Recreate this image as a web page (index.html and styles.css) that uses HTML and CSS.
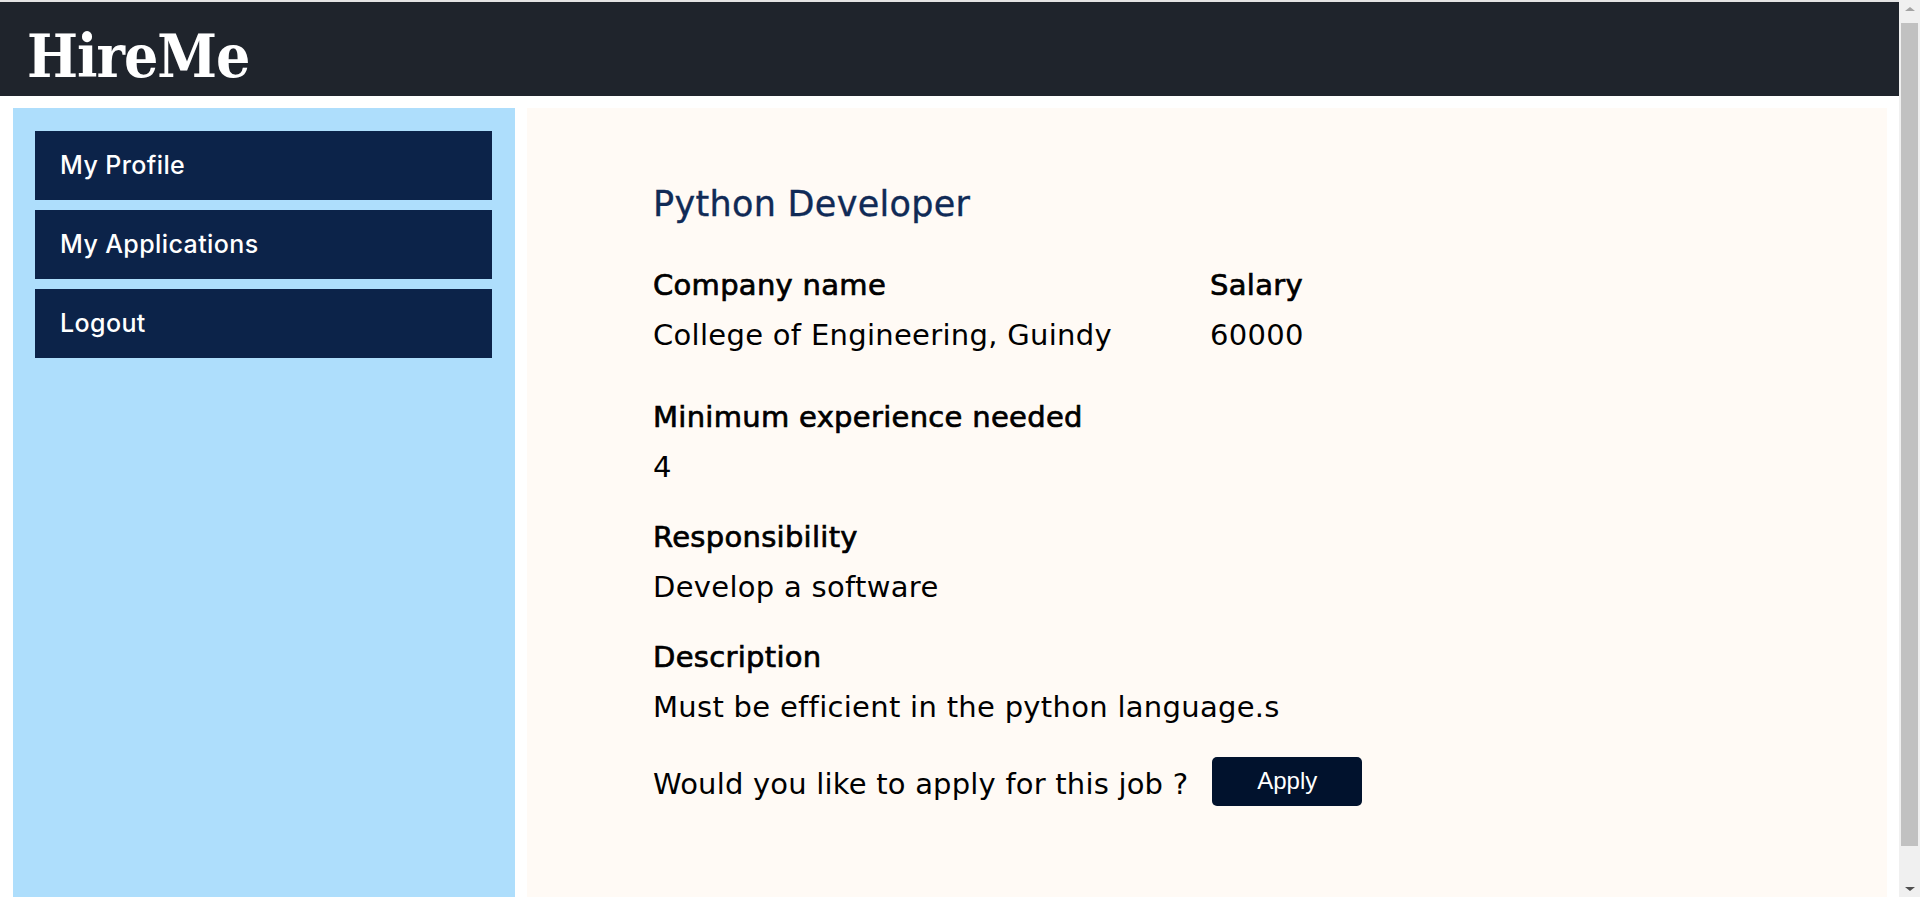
FILE: index.html
```html
<!DOCTYPE html>
<html lang="en">
<head>
<meta charset="utf-8">
<title>HireMe</title>
<link rel="stylesheet" href="styles.css">
</head>
<body>
<header class="topbar">
  <h1 class="brand">HireMe</h1>
</header>
<div class="layout">
  <aside class="sidebar">
    <nav class="menu">
      <a class="menu-item" href="#">My Profile</a>
      <a class="menu-item" href="#">My Applications</a>
      <a class="menu-item" href="#">Logout</a>
    </nav>
  </aside>
  <main class="panel">
    <h2 class="job-title">Python Developer</h2>
    <div class="row-two">
      <div class="field">
        <div class="label">Company name</div>
        <div class="value">College of Engineering, Guindy</div>
      </div>
      <div class="field">
        <div class="label">Salary</div>
        <div class="value">60000</div>
      </div>
    </div>
    <div class="field">
      <div class="label">Minimum experience needed</div>
      <div class="value">4</div>
    </div>
    <div class="field">
      <div class="label">Responsibility</div>
      <div class="value">Develop a software</div>
    </div>
    <div class="field field-last">
      <div class="label">Description</div>
      <div class="value">Must be efficient in the python language.s</div>
    </div>
    <div class="apply-row">
      <span class="question">Would you like to apply for this job ?</span>
      <button class="apply-btn" type="button">Apply</button>
    </div>
  </main>
</div>
<div class="scrollbar" aria-hidden="true">
  <span class="sb-btn sb-up"></span>
  <span class="sb-thumb"></span>
  <span class="sb-btn sb-down"></span>
</div>
</body>
</html>
```
FILE: styles.css
```css
* { box-sizing: border-box; }

html, body {
  margin: 0;
  padding: 0;
  background: #ffffff;
}

html {
  scrollbar-width: none;
}

body {
  padding-right: 21px;
}

.scrollbar {
  position: fixed;
  top: 0;
  right: 0;
  bottom: 0;
  width: 21px;
  background: #f0f0f0;
  display: flex;
  flex-direction: column;
  align-items: center;
}

.sb-btn {
  display: flex;
  align-items: center;
  justify-content: center;
  width: 21px;
  height: 21px;
  flex: 0 0 21px;
}

.sb-up::before {
  content: "";
  border-left: 5px solid transparent;
  border-right: 5px solid transparent;
  border-bottom: 4px solid #a3a3a3;
  margin-top: -4px;
}

.sb-down {
  margin-top: auto;
}

.sb-down::before {
  content: "";
  border-left: 5px solid transparent;
  border-right: 5px solid transparent;
  border-top: 4px solid #505050;
  margin-top: 4px;
}

.sb-thumb {
  width: 17px;
  height: 823px;
  margin-top: 2px;
  background: #c1c1c1;
}

.topbar {
  border-top: 2px solid #e4e4e4;
  background: #1f242c;
  height: 96px;
  padding: 24px 0 10px 27px;
}

.brand {
  margin: 0;
  font-family: "DejaVu Serif Condensed", "DejaVu Serif", serif;
  font-stretch: condensed;
  font-weight: bold;
  font-size: 60px;
  line-height: 60px;
  color: #ffffff;
  letter-spacing: -1px;
}

.layout {
  display: flex;
  gap: 12px;
  padding: 12px 12px 12px 13px;
}

.sidebar {
  flex: 0 0 502px;
  background: #aedefc;
  padding: 23px 23px 0 22px;
}

.menu {
  display: flex;
  flex-direction: column;
  gap: 10px;
}

.menu-item {
  display: flex;
  align-items: center;
  height: 69px;
  padding-left: 25px;
  padding-bottom: 2px;
  background: #0c2349;
  color: #ffffff;
  text-decoration: none;
  font-family: Inter, "Noto Sans", sans-serif;
  font-weight: 500;
  font-size: 25px;
  letter-spacing: 0.4px;
}

.panel {
  flex: 1 1 auto;
  min-height: 815px;
  background: #fffaf5;
  padding: 71px 40px 40px 126px;
  font-family: "DejaVu Sans", sans-serif;
  color: #000000;
}

.job-title {
  margin: 0 0 31px 0;
  font-weight: normal;
  font-size: 35px;
  line-height: 50px;
  letter-spacing: 0.3px;
  color: #102a56;
  -webkit-text-stroke: 0.35px #102a56;
}

.row-two {
  display: grid;
  grid-template-columns: 557px auto;
  margin-bottom: 32px;
}

.row-two .field {
  margin-bottom: 0;
}

.field {
  margin-bottom: 20px;
}

.field-last {
  margin-bottom: 21px;
}

.label,
.value,
.question {
  font-size: 29px;
  line-height: 50px;
  letter-spacing: 0.3px;
}

.label {
  -webkit-text-stroke: 0.7px #000000;
}

.question {
  padding-top: 6px;
  letter-spacing: 0.2px;
}

.apply-row {
  display: flex;
  align-items: center;
  gap: 24px;
}

.apply-btn {
  width: 150px;
  height: 49px;
  border: none;
  border-radius: 5px;
  background: #01122d;
  color: #ffffff;
  font-family: "Liberation Sans", Arial, sans-serif;
  font-size: 24px;
  padding: 0;
}
```
